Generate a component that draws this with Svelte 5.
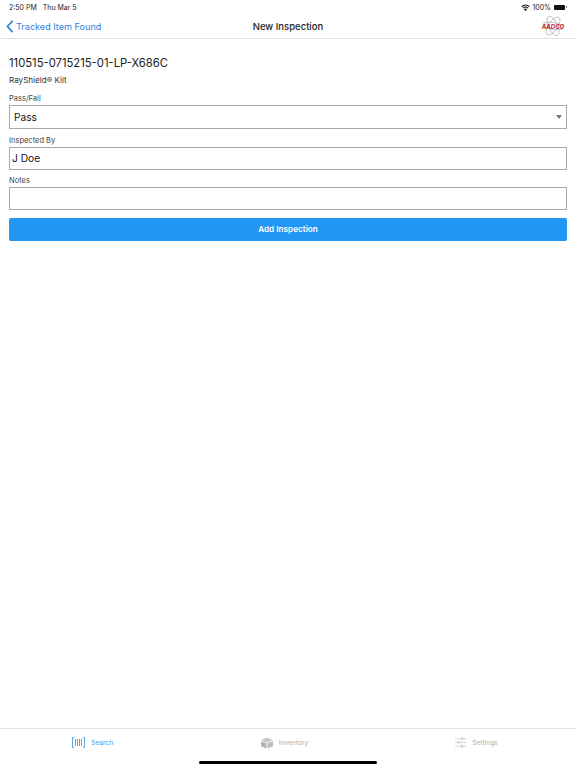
<script>
    let passFail = $state('Pass');
    let inspectedBy = $state('J Doe');
    let notes = $state('');
</script>

<main>
    <div class="status">
        <span class="time">2:50 PM</span>
        <span class="date">Thu Mar 5</span>
        <span class="status-right">
            <svg class="wifi" viewBox="0 0 12 9" width="9" height="7">
                <path d="M6 9 L4 6.7 A3 3 0 0 1 8 6.7 Z" fill="#111" />
                <path d="M3.2 5.8 A4.3 4.3 0 0 1 8.8 5.8 L9.8 4.7 A5.8 5.8 0 0 0 2.2 4.7 Z" fill="#111" />
                <path d="M1.4 3.9 A6.8 6.8 0 0 1 10.6 3.9 L11.7 2.8 A8.3 8.3 0 0 0 0.3 2.8 Z" fill="#111" />
            </svg>
            <span>100%</span>
            <span class="battery"></span>
            <span class="battery-cap"></span>
        </span>
    </div>

    <header>
        <div class="back">
            <svg viewBox="0 0 8 14" width="8" height="13">
                <path d="M6.8 1 L1.3 7 L6.8 13" fill="none" stroke="#2f80d8" stroke-width="1.8" />
            </svg>
            <span>Tracked Item Found</span>
        </div>
        <div class="title">New Inspection</div>
        <svg class="logo" viewBox="0 0 24 22" width="24" height="22">
            <g fill="none" stroke="#a0a0a8" stroke-width="0.6">
                <ellipse cx="12" cy="11" rx="4.5" ry="10.5" transform="rotate(-25 12 11)" />
                <ellipse cx="12" cy="11" rx="4.5" ry="10.5" transform="rotate(35 12 11)" />
                <ellipse cx="12" cy="11" rx="10" ry="3.5" transform="rotate(10 12 11)" />
            </g>
            <text x="12" y="13.5" text-anchor="middle">AADCO</text>
        </svg>
    </header>

    <section class="form">
        <h1>110515-0715215-01-LP-X686C</h1>
        <p class="product">RayShield® Kilt</p>

        <label class="first">
            Pass/Fail
            <span class="select">
                <select bind:value={passFail}>
                    <option>Pass</option>
                    <option>Fail</option>
                </select>
                <span class="caret"></span>
            </span>
        </label>
        <label>
            Inspected By
            <input bind:value={inspectedBy} />
        </label>
        <label>
            Notes
            <input bind:value={notes} />
        </label>

        <button>Add Inspection</button>
    </section>

    <nav>
        <div class="tab active">
            <svg viewBox="0 0 13 11" width="13" height="11">
                <g fill="none" stroke="#5aa8ea" stroke-width="1">
                    <path d="M2 .5 H.5 V10.5 H2" />
                    <path d="M11 .5 H12.5 V10.5 H11" />
                    <path d="M3.5 2 V9 M5.5 2 V9 M7.5 2 V9 M9.5 2 V9" />
                </g>
            </svg>
            <span>Search</span>
        </div>
        <div class="tab">
            <svg viewBox="0 0 13 12" width="12" height="12">
                <path d="M6.5 0 L13 2.8 L6.5 5.6 L0 2.8 Z" fill="#c6c6c6" />
                <path d="M0 3.8 L6 6.4 V12 L0 9.4 Z" fill="#b4b4b4" />
                <path d="M13 3.8 L7 6.4 V12 L13 9.4 Z" fill="#bdbdbd" />
            </svg>
            <span>Inventory</span>
        </div>
        <div class="tab">
            <svg viewBox="0 0 12 11" width="11" height="11">
                <g stroke="#c4c4c4" stroke-width="0.8">
                    <path d="M0 1.5 H12 M0 5.5 H12 M0 9.5 H12" />
                </g>
                <g fill="#fff" stroke="#c4c4c4" stroke-width="0.7">
                    <rect x="7" y="0.4" width="1.6" height="2.2" />
                    <rect x="3" y="4.4" width="1.6" height="2.2" />
                    <rect x="7" y="8.4" width="1.6" height="2.2" />
                </g>
            </svg>
            <span>Settings</span>
        </div>
        <div class="home-bar"></div>
    </nav>
</main>

<style>
    :global(body) {
        margin: 0;
        background: #fff;
    }

    main {
        width: 576px;
        height: 768px;
        display: flex;
        flex-direction: column;
        overflow: hidden;
        font-family: Inter, "Liberation Sans", sans-serif;
        color: #111;
    }

    .status {
        height: 14px;
        padding: 0 9px;
        display: flex;
        align-items: center;
        gap: 6px;
        font-size: 7px;
        color: #222;
    }

    .status-right {
        margin-left: auto;
        display: flex;
        align-items: center;
        gap: 2px;
    }

    .battery {
        width: 11px;
        height: 5px;
        margin-left: 1px;
        background: #111;
        border-radius: 1px;
    }

    .battery-cap {
        width: 1px;
        height: 2px;
        margin-left: -1px;
        background: #777;
    }

    header {
        height: 24px;
        padding: 0 11px 0 6px;
        display: flex;
        align-items: center;
        justify-content: space-between;
        position: relative;
        border-bottom: 1px solid #e0e0e0;
    }

    .back {
        display: flex;
        align-items: center;
        gap: 2px;
        color: #2f80d8;
        font-size: 9.1px;
    }

    .title {
        position: absolute;
        left: 0;
        right: 0;
        text-align: center;
        font-size: 9.5px;
        font-weight: 500;
        color: #222;
    }

    .logo text {
        font-size: 6px;
        font-weight: 700;
        font-style: italic;
        fill: #c8202c;
    }

    .form {
        padding: 0 9px;
        display: flex;
        flex-direction: column;
    }

    h1 {
        margin: 17px 0 0;
        font-size: 11.25px;
        line-height: 15px;
        font-weight: 400;
        color: #222;
    }

    .product {
        margin: 2px 0 0;
        font-size: 8.1px;
        line-height: 14px;
        color: #333;
    }

    label {
        display: flex;
        flex-direction: column;
        margin-top: 6px;
        font-size: 7.5px;
        line-height: 12px;
        color: #444;
    }

    label:last-of-type {
        margin-top: 5px;
    }

    .select {
        position: relative;
        display: block;
    }

    input,
    select {
        display: block;
        box-sizing: border-box;
        width: 100%;
        height: 23px;
        padding: 0 2px 2px;
        appearance: none;
        border: 1px solid #a8a8a8;
        border-radius: 0;
        background: #fff;
        font-family: inherit;
        font-size: 10.2px;
        color: #111;
        outline: none;
    }

    select {
        height: 24px;
        padding: 0 4px;
    }

    .caret {
        position: absolute;
        right: 5px;
        top: 10px;
        border-left: 3.5px solid transparent;
        border-right: 3.5px solid transparent;
        border-top: 4px solid #777;
    }

    button {
        margin-top: 8px;
        height: 23px;
        padding: 0 0 2px;
        border: none;
        border-radius: 2px;
        background: #2196f3;
        color: #fff;
        font-family: inherit;
        font-size: 8.2px;
        font-weight: 600;
    }

    nav {
        margin-top: auto;
        height: 39px;
        position: relative;
        display: grid;
        grid-template-columns: repeat(3, 1fr);
        border-top: 1px solid #e4e4e4;
    }

    .tab {
        height: 27px;
        padding-right: 7px;
        display: flex;
        align-items: center;
        justify-content: center;
        gap: 6px;
        font-size: 6.7px;
        color: #b0b0b0;
    }

    .tab.active {
        color: #4ba0e8;
    }

    .home-bar {
        position: absolute;
        left: 199px;
        bottom: 4px;
        width: 178px;
        height: 3px;
        border-radius: 2px;
        background: #000;
    }
</style>
